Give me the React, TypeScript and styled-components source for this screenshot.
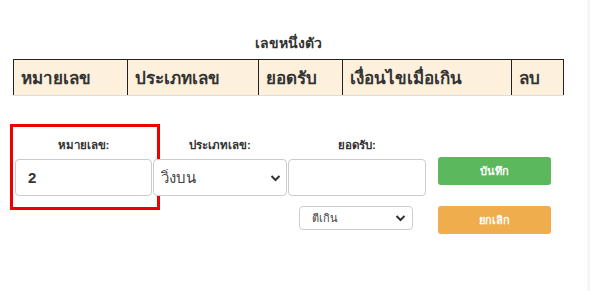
import React, { useState } from "react";
import styled, { createGlobalStyle } from "styled-components";

const GlobalStyle = createGlobalStyle`
  html, body {
    margin: 0;
    padding: 0;
    background: #fff;
  }
  body {
    font-family: Tahoma, "Liberation Sans", "Noto Sans", sans-serif;
    color: #333;
  }
`;

const Page = styled.div`
  display: flex;
  width: 590px;
  height: 291px;
`;

const Main = styled.div`
  flex: 1;
  padding: 33px 0 0 13px;
`;

const EdgeStrip = styled.div`
  width: 3px;
  background: #f6f6f6;
`;

const Title = styled.div`
  width: 550px;
  text-align: center;
  font-size: 14px;
  font-weight: bold;
  line-height: 20px;
  margin-bottom: 6px;
`;

const Table = styled.table`
  width: 551px;
  border-collapse: collapse;
  background: #fdf0dc;
`;

const HeadCell = styled.th<{ w: number }>`
  width: ${(p) => p.w}px;
  height: 36px;
  box-sizing: border-box;
  padding: 0 7px;
  text-align: left;
  font-size: 17px;
  font-weight: bold;
  color: #333;
  border: 1px solid #222;
  border-bottom: 1px solid #ddd;
`;

const FormArea = styled.div`
  display: flex;
  margin-top: 28px;
  margin-left: -3px;
`;

const Fields = styled.div`
  display: flex;
  flex-direction: column;
`;

const FieldRow = styled.div`
  display: flex;
`;

const Field = styled.div<{ highlight?: boolean }>`
  display: flex;
  flex-direction: column;
  align-items: center;
  box-sizing: border-box;
  padding: ${(p) => (p.highlight ? "12px 5px 11px 2px" : "15px 0 0")};
  border: ${(p) => (p.highlight ? "3px solid #e00" : "none")};
  margin-right: ${(p) => (p.highlight ? "-8px" : "0")};
`;

const Label = styled.label`
  font-size: 11.5px;
  font-weight: bold;
  line-height: 12px;
  margin-bottom: 8px;
  color: #333;
`;

const TextInput = styled.input<{ w: number }>`
  width: ${(p) => p.w}px;
  height: 37px;
  box-sizing: border-box;
  border: 1px solid #ccc;
  border-radius: 4px;
  padding: 0 12px;
  font-family: inherit;
  font-size: 15px;
  font-weight: bold;
  color: #333;
  outline: none;
`;

const SelectBox = styled.div<{ w: number; h: number }>`
  position: relative;
  width: ${(p) => p.w}px;
  height: ${(p) => p.h}px;
  box-sizing: border-box;
  border: 1px solid #ccc;
  border-radius: 4px;
  background: #fff;
  margin: 0 1px;
`;

const Select = styled.select<{ small?: boolean }>`
  appearance: none;
  width: 100%;
  height: 100%;
  border: none;
  background: transparent;
  padding: ${(p) => (p.small ? "0 0 0 12px" : "0 0 0 7px")};
  font-family: inherit;
  font-size: ${(p) => (p.small ? "11px" : "15px")};
  color: #444;
  outline: none;
`;

const Chevron = styled.svg<{ small?: boolean }>`
  position: absolute;
  right: ${(p) => (p.small ? "6px" : "5px")};
  top: 50%;
  transform: translateY(-50%);
  pointer-events: none;
`;

const SecondRow = styled.div`
  display: flex;
  justify-content: flex-end;
  margin-top: -4px;
  padding-right: 12px;
`;

const Buttons = styled.div`
  display: flex;
  flex-direction: column;
  gap: 21px;
  margin-left: 12px;
  padding-top: 33px;
`;

const Button = styled.button<{ variant: "save" | "cancel" }>`
  width: 113px;
  height: 28px;
  border: none;
  border-radius: 3px;
  font-family: inherit;
  font-size: 11px;
  font-weight: bold;
  color: #fff;
  cursor: pointer;
  background: ${(p) => (p.variant === "save" ? "#5cb85c" : "#f0ad4e")};
`;

const ChevronIcon: React.FC<{ small?: boolean }> = ({ small }) => (
  <Chevron small={small} width="11" height="8" viewBox="0 0 11 8">
    <path d="M1.5 2 L5.5 6 L9.5 2" fill="none" stroke="#333" strokeWidth="2" />
  </Chevron>
);

const columns = [
  { label: "หมายเลข", w: 114 },
  { label: "ประเภทเลข", w: 131 },
  { label: "ยอดรับ", w: 85 },
  { label: "เงื่อนไขเมื่อเกิน", w: 169 },
  { label: "ลบ", w: 52 },
];

const App: React.FC = () => {
  const [num, setNum] = useState("2");
  const [amount, setAmount] = useState("");

  return (
    <Page>
      <GlobalStyle />
      <Main>
        <Title>เลขหนึ่งตัว</Title>
        <Table>
          <thead>
            <tr>
              {columns.map((c) => (
                <HeadCell key={c.label} w={c.w}>
                  {c.label}
                </HeadCell>
              ))}
            </tr>
          </thead>
        </Table>

        <FormArea>
          <Fields>
            <FieldRow>
              <Field highlight>
                <Label>หมายเลข:</Label>
                <TextInput w={137} value={num} onChange={(e) => setNum(e.target.value)} />
              </Field>
              <Field>
                <Label>ประเภทเลข:</Label>
                <SelectBox w={134} h={37}>
                  <Select defaultValue="top">
                    <option value="top">วิ่งบน</option>
                    <option value="bottom">วิ่งล่าง</option>
                  </Select>
                  <ChevronIcon />
                </SelectBox>
              </Field>
              <Field>
                <Label>ยอดรับ:</Label>
                <TextInput w={138} value={amount} onChange={(e) => setAmount(e.target.value)} />
              </Field>
            </FieldRow>
            <SecondRow>
              <SelectBox w={114} h={24}>
                <Select small defaultValue="over">
                  <option value="over">ตีเกิน</option>
                  <option value="close">ปิดรับ</option>
                </Select>
                <ChevronIcon small />
              </SelectBox>
            </SecondRow>
          </Fields>
          <Buttons>
            <Button variant="save">บันทึก</Button>
            <Button variant="cancel">ยกเลิก</Button>
          </Buttons>
        </FormArea>
      </Main>
      <EdgeStrip />
    </Page>
  );
};

export default App;
